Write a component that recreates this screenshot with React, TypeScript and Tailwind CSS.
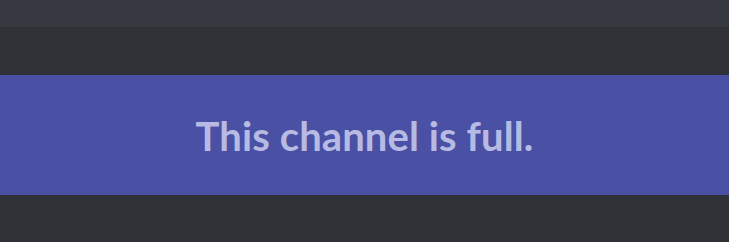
import React from 'react';

export default function App() {
  return (
    <div className="w-[729px] h-[242px] flex flex-col bg-[#2f3136] overflow-hidden">
      <div className="h-[27px] shrink-0 bg-[#36393f]" />
      <div className="h-[48px] shrink-0" />
      <div className="h-[120px] shrink-0 bg-[#4a50a3] flex items-center justify-center">
        <span className="font-['Lato',sans-serif] font-bold text-[40px] tracking-[0.1px] leading-none text-[#b7bbe4] pt-[2px]">
          This channel is full.
        </span>
      </div>
    </div>
  );
}
